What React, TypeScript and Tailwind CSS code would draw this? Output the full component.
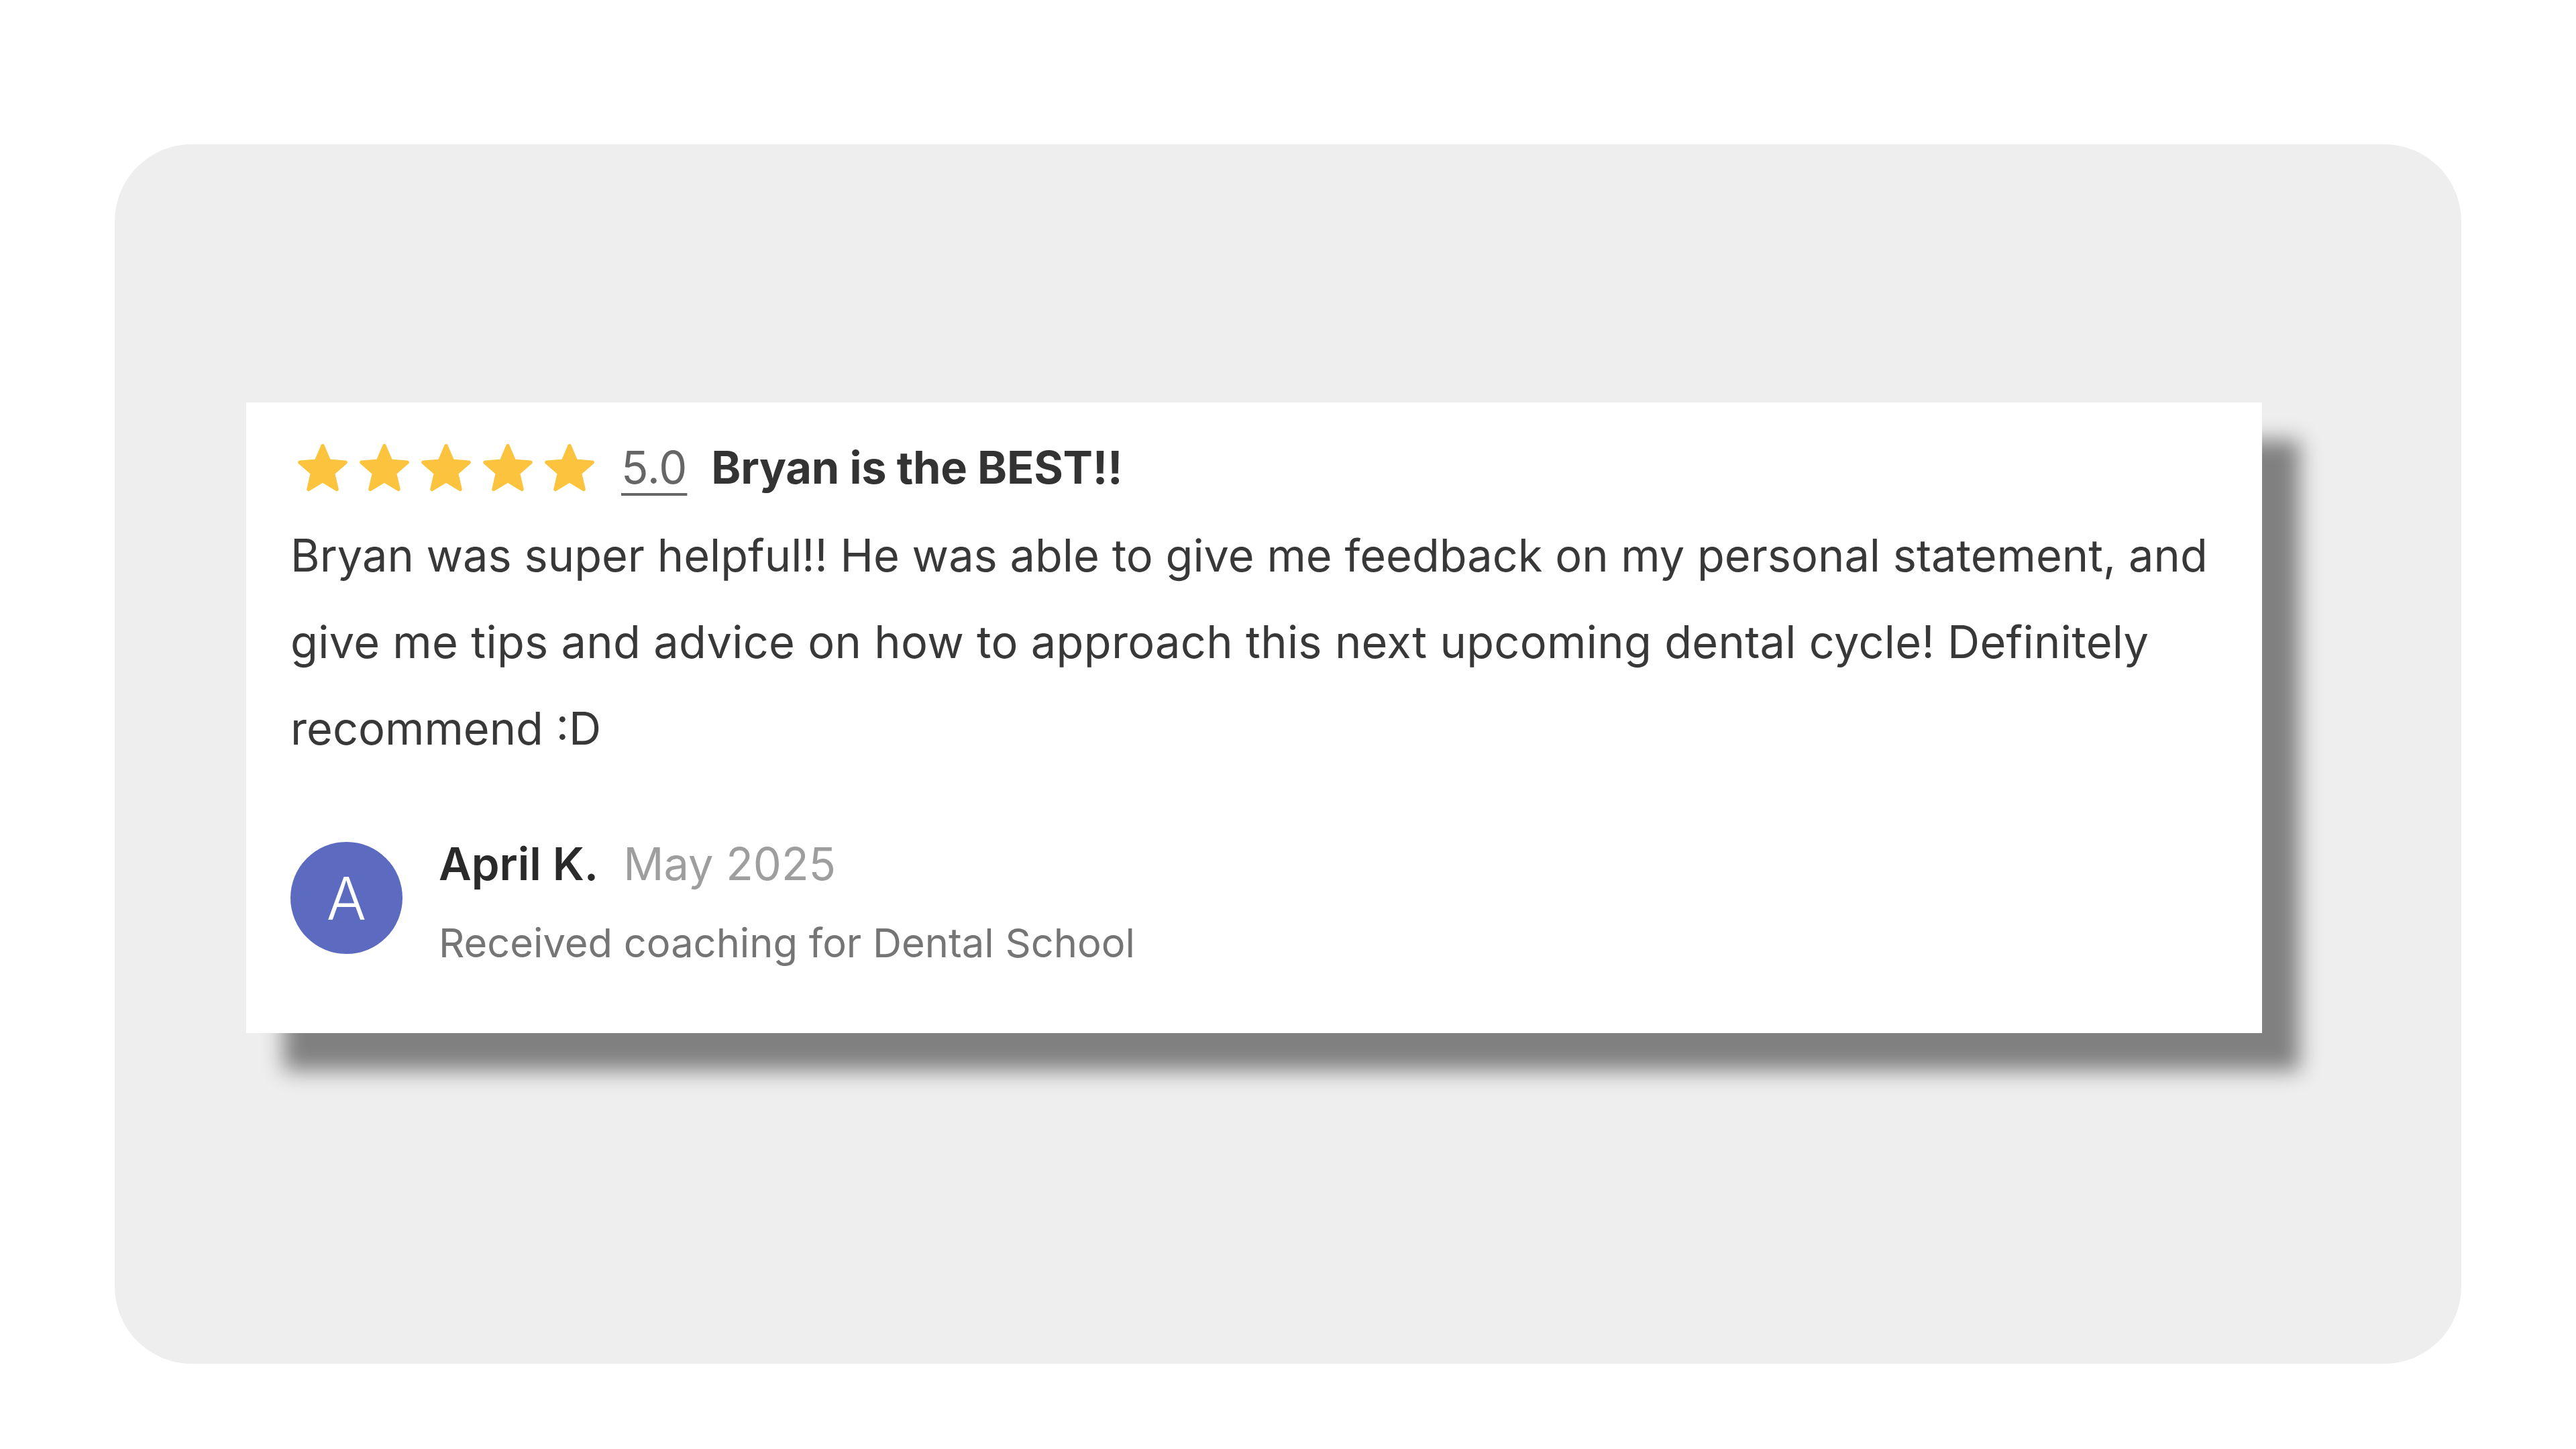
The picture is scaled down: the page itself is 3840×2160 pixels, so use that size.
import React from "react";

function Star() {
  return (
    <svg viewBox="0 0 24 24" className="w-[88px] h-[88px] shrink-0" aria-hidden="true">
      <path
        d="M12 17.27L18.18 21l-1.64-7.03L22 9.24l-7.19-.61L12 2 9.19 8.63 2 9.24l5.46 4.73L5.82 21z"
        transform="translate(12 12) scale(0.93) translate(-12 -11.5)"
        fill="#fcc43e"
        stroke="#fcc43e"
        strokeWidth="1.6"
        strokeLinejoin="round"
      />
    </svg>
  );
}

export default function App() {
  return (
    <div className="w-[3840px] h-[2160px] bg-white pt-[215px] pl-[171px] font-['Inter',sans-serif]">
      <div className="w-[3498px] h-[1818px] rounded-[115px] bg-[#eeeeee] pt-[385px] pl-[196px]">
        <div className="w-[3005px] bg-white shadow-[56px_56px_30px_#808080] pt-[47px] pb-[95px] pl-[66px] pr-[40px]">
          <div className="flex items-center h-[100px]">
            <div className="flex items-center gap-[4px] ml-[4px]">
              <Star />
              <Star />
              <Star />
              <Star />
              <Star />
            </div>
            <span className="ml-[33px] text-[66.7px] text-[#666666] underline decoration-[4px] underline-offset-[14px] font-normal">
              5.0
            </span>
            <span className="ml-[36px] text-[66.7px] font-bold text-[#333333] tracking-[-0.3px]">
              Bryan is the BEST!!
            </span>
          </div>
          <p className="mt-[16px] text-[66.7px] leading-[129px] text-[#383838] whitespace-nowrap">
            Bryan was super helpful!! He was able to give me feedback on my personal statement, and
            <br />
            <span className="tracking-[0.3px]">
              give me tips and advice on how to approach this next upcoming dental cycle! Definitely
            </span>
            <br />
            recommend :D
          </p>
          <div className="mt-[98px] flex items-start">
            <div className="mt-[7px] w-[167px] h-[167px] rounded-full bg-[#5c6bc0] flex items-center justify-center shrink-0">
              <span className="text-[88px] font-light text-white leading-none">A</span>
            </div>
            <div className="ml-[54px] flex flex-col gap-[37px]">
              <div className="flex items-baseline h-[80px] leading-[80px]">
                <span className="text-[67px] font-semibold text-[#2a2a2a]">April K.</span>
                <span className="ml-[37px] text-[66.7px] text-[#9e9e9e]">May 2025</span>
              </div>
              <div className="h-[80px] leading-[80px] text-[59.6px] text-[#757575]">
                Received coaching for Dental School
              </div>
            </div>
          </div>
        </div>
      </div>
    </div>
  );
}
